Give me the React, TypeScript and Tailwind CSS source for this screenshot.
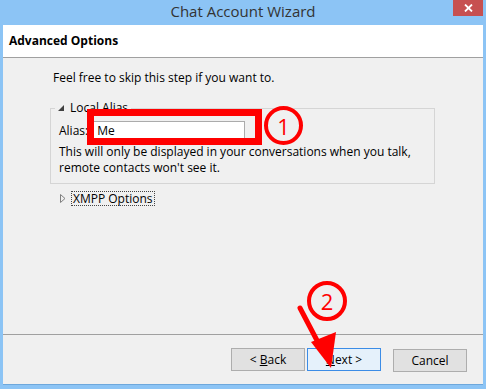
import React from 'react'

const ui = { fontFamily: '"Open Sans", "Noto Sans", sans-serif' }

function Btn({ children, focused }: { children: React.ReactNode; focused?: boolean }) {
  return (
    <button
      className={
        'w-[74px] h-[23px] bg-[#e1e1e1] text-[12px] text-black border ' +
        (focused ? 'border-[#3c8ce6] bg-[#e5f1fb]' : 'border-[#adadad]')
      }
    >
      {children}
    </button>
  )
}

export default function App() {
  return (
    <div className="relative w-[486px] h-[389px] bg-[#8cc4f5] flex flex-col overflow-hidden" style={ui}>
      {/* title bar */}
      <div className="relative h-[25px] flex items-center justify-center shrink-0">
        <span className="text-[15px] text-[#333] leading-none -mt-[2px]">Chat Account Wizard</span>
        <div className="absolute right-[3px] top-0 w-[30px] h-[16px] bg-[#c75050] flex items-center justify-center">
          <svg width="9" height="8" viewBox="0 0 9 8">
            <path d="M1 0.5 L8 7.5 M8 0.5 L1 7.5" stroke="white" strokeWidth="1.8" />
          </svg>
        </div>
      </div>

      {/* client */}
      <div className="mx-[3px] h-[360px] bg-[#f0f0f0] flex flex-col border-b border-[#6ea8dc]">
        <div className="h-[33px] bg-white border-b border-[#a0a0a0] flex items-center pl-[6px] shrink-0">
          <span className="text-[12px] font-bold text-black">Advanced Options</span>
        </div>

        <div className="flex-1 pl-[47px] pr-[48px] pt-[12px] text-[12px] text-black leading-[16px]">
          <p className="ml-[3px]">Feel free to skip this step if you want to.</p>

          <fieldset className="mt-[14px] border border-[#d5d5d5] px-[8px] pb-[7px]">
            <legend className="-ml-[4px] pl-[3px] pr-[3px] flex items-center gap-[6px]">
              <svg width="6" height="6" viewBox="0 0 6 6">
                <path d="M6 0 L6 6 L0 6 Z" fill="#404040" />
              </svg>
              Local Alias
            </legend>
            <div className="flex items-center gap-[4px] mt-[5px]">
              <span>Alias:</span>
              <div className="w-[153px] h-[19px] bg-white border border-[#ababab] flex items-center pl-[4px]">Me</div>
            </div>
            <p className="mt-[4px]">
              This will only be displayed in your conversations when you talk,
              <br />
              remote contacts won't see it.
            </p>
          </fieldset>

          <div className="mt-[7px] flex items-center gap-[5px] pl-[10px]">
            <svg width="6" height="9" viewBox="0 0 6 9">
              <path d="M0.5 0.5 L5 4.5 L0.5 8.5 Z" fill="none" stroke="#808080" />
            </svg>
            <span className="border border-dotted border-[#444] px-[1px] leading-[13px]">XMPP Options</span>
          </div>
        </div>

        <div className="h-[50px] border-t border-[#a0a0a0] flex items-center justify-end pr-[16px] shrink-0">
          <div className="flex gap-[2px]">
            <Btn>
              &lt; <u>B</u>ack
            </Btn>
            <Btn focused>
              <u>N</u>ext &gt;
            </Btn>
          </div>
          <div className="ml-[12px]">
            <Btn>Cancel</Btn>
          </div>
        </div>
      </div>

      {/* annotations */}
      <div className="absolute left-[87px] top-[109px] w-[175px] h-[36px] border-[7px] border-[#ff0000]" />
      <div className="absolute left-[264px] top-[106px] w-[39px] h-[39px] rounded-full border-[4px] border-[#ff0000] flex items-center justify-center text-[#ff0000] text-[22px] leading-none">
        1
      </div>
      <div className="absolute left-[307px] top-[281px] w-[40px] h-[40px] rounded-full border-[4px] border-[#ff0000] flex items-center justify-center text-[#ff0000] text-[22px] leading-none">
        2
      </div>
      <svg className="absolute left-0 top-0 pointer-events-none" width="486" height="389">
        <line x1="300" y1="308" x2="322" y2="350" stroke="#ff0000" strokeWidth="5" strokeLinecap="round" />
        <path d="M331 368 L311 342 L336 332 Z" fill="#ff0000" />
      </svg>
    </div>
  )
}
